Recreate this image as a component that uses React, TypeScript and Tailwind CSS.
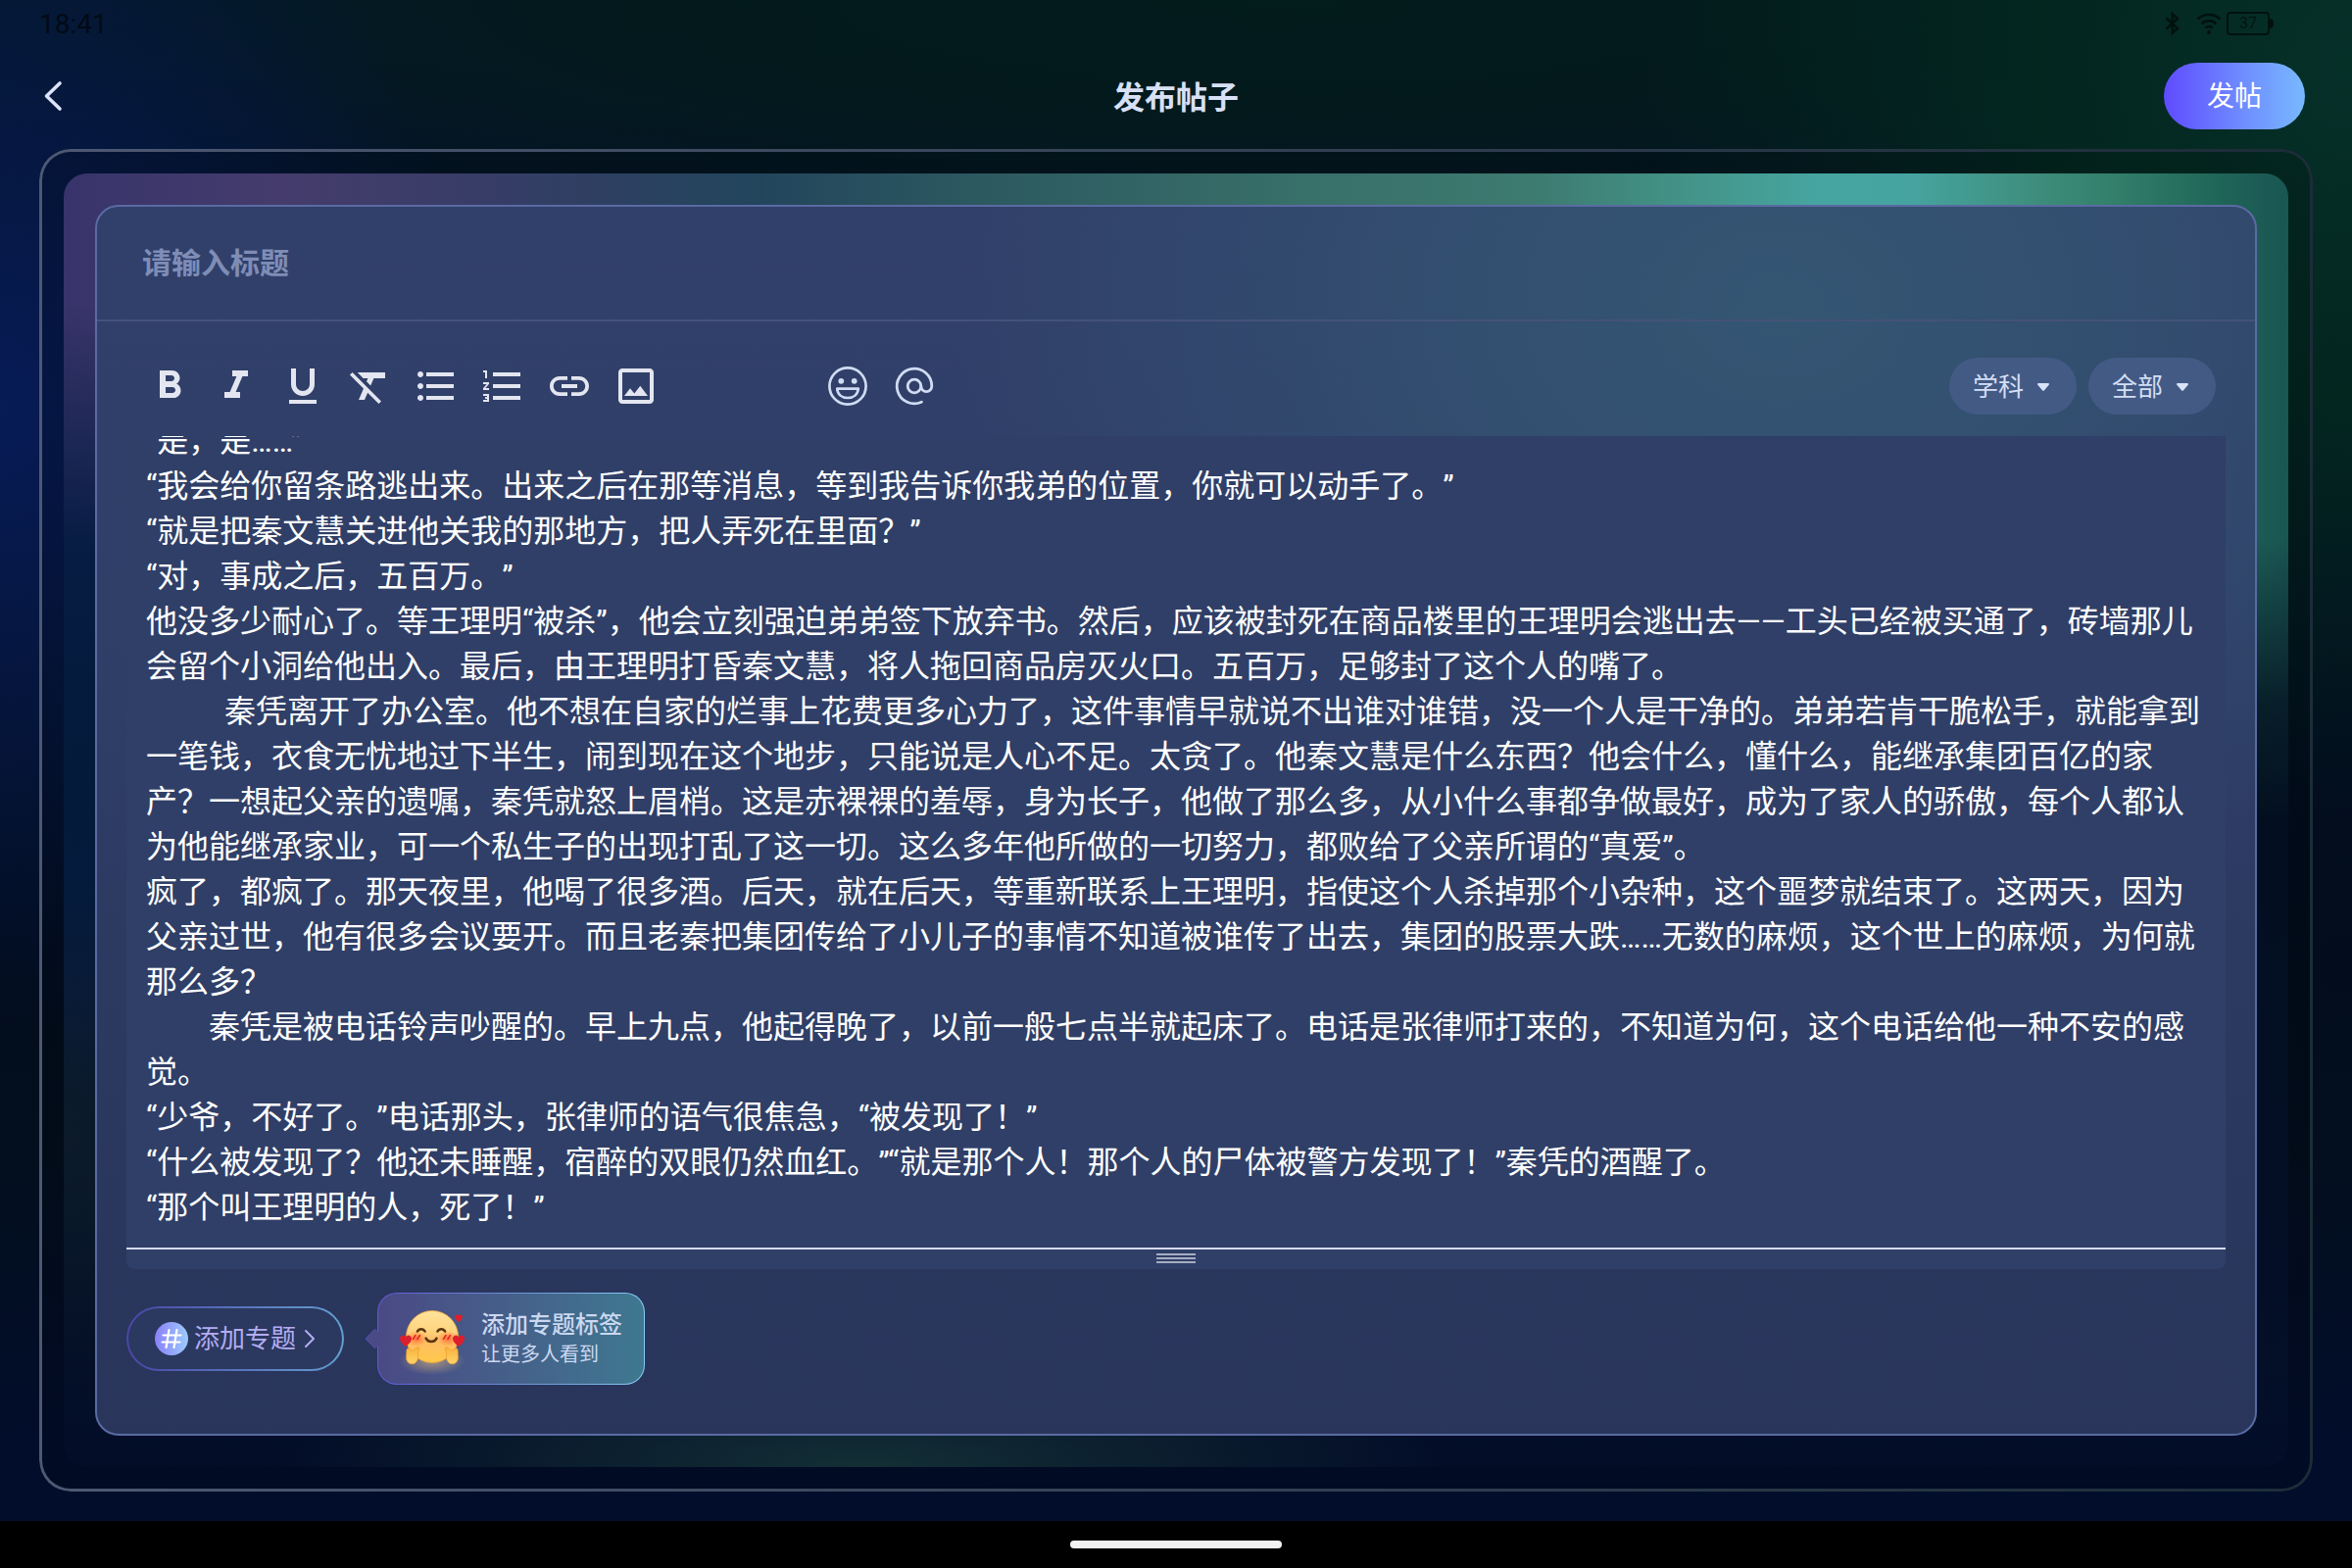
import { useLayoutEffect, useRef } from "react";
import type { ReactNode } from "react";
import {
  MdFormatBold,
  MdFormatItalic,
  MdFormatUnderlined,
  MdFormatClear,
  MdFormatListBulleted,
  MdFormatListNumbered,
  MdInsertLink,
  MdOutlineImage,
} from "react-icons/md";

const BODY = [
  "“是，是……”",
  "“我会给你留条路逃出来。出来之后在那等消息，等到我告诉你我弟的位置，你就可以动手了。”",
  "“就是把秦文慧关进他关我的那地方，把人弄死在里面？”",
  "“对，事成之后，五百万。”",
  "他没多少耐心了。等王理明“被杀”，他会立刻强迫弟弟签下放弃书。然后，应该被封死在商品楼里的王理明会逃出去——工头已经被买通了，砖墙那儿会留个小洞给他出入。最后，由王理明打昏秦文慧，将人拖回商品房灭火口。五百万，足够封了这个人的嘴了。",
  "\u3000\u3000  秦凭离开了办公室。他不想在自家的烂事上花费更多心力了，这件事情早就说不出谁对谁错，没一个人是干净的。弟弟若肯干脆松手，就能拿到一笔钱，衣食无忧地过下半生，闹到现在这个地步，只能说是人心不足。太贪了。他秦文慧是什么东西？他会什么，懂什么，能继承集团百亿的家产？一想起父亲的遗嘱，秦凭就怒上眉梢。这是赤裸裸的羞辱，身为长子，他做了那么多，从小什么事都争做最好，成为了家人的骄傲，每个人都认为他能继承家业，可一个私生子的出现打乱了这一切。这么多年他所做的一切努力，都败给了父亲所谓的“真爱”。",
  "疯了，都疯了。那天夜里，他喝了很多酒。后天，就在后天，等重新联系上王理明，指使这个人杀掉那个小杂种，这个噩梦就结束了。这两天，因为父亲过世，他有很多会议要开。而且老秦把集团传给了小儿子的事情不知道被谁传了出去，集团的股票大跌……无数的麻烦，这个世上的麻烦，为何就那么多？",
  "\u3000\u3000秦凭是被电话铃声吵醒的。早上九点，他起得晚了，以前一般七点半就起床了。电话是张律师打来的，不知道为何，这个电话给他一种不安的感觉。",
  "“少爷，不好了。”电话那头，张律师的语气很焦急，“被发现了！”",
  "“什么被发现了？他还未睡醒，宿醉的双眼仍然血红。”“就是那个人！那个人的尸体被警方发现了！”秦凭的酒醒了。",
  "“那个叫王理明的人，死了！”",
].join("\n");

function SmileIcon() {
  return (
    <svg viewBox="-24 -24 48 48" className="size-12" fill="none" stroke="currentColor" strokeWidth="2.7">
      <circle r="18.6" />
      <circle cx="-6.7" cy="-5.2" r="2.9" fill="currentColor" stroke="none" />
      <circle cx="6.7" cy="-5.2" r="2.9" fill="currentColor" stroke="none" />
      <path d="M-10.8 2.6H10.8C10.3 8.4 6 12 0 12S-10.3 8.4-10.8 2.6Z" strokeLinejoin="round" />
    </svg>
  );
}

function AtIcon() {
  return (
    <svg viewBox="-24 -24 48 48" className="size-12" fill="none" stroke="currentColor" strokeWidth="2.8" strokeLinecap="round">
      <circle r="6.8" />
      <path d="M6.8 0a5.5 5.6 0 0 0 11 0A17.8 17.8 0 1 0 7.4 16.2" />
    </svg>
  );
}

function HugEmoji() {
  const heart = "M0 6C-3.5 3.4-6 .8-6-2A3.2 3.2 0 0 1 0-3.8 3.2 3.2 0 0 1 6-2C6 .8 3.5 3.4 0 6Z";
  return (
    <svg viewBox="0 0 68 58" className="h-[58px] w-[68px] overflow-visible" aria-hidden="true">
      <defs>
        <linearGradient id="face" x1="0" y1="0" x2="0" y2="1">
          <stop offset="0" stopColor="#ffe39a" />
          <stop offset="0.35" stopColor="#ffd682" />
          <stop offset="0.6" stopColor="#ffbd63" />
          <stop offset="1" stopColor="#ffc94a" />
        </linearGradient>
        <radialGradient id="blush">
          <stop offset="0" stopColor="#ff5a36" stopOpacity="0.85" />
          <stop offset="1" stopColor="#ff7a3a" stopOpacity="0" />
        </radialGradient>
        <radialGradient id="glow">
          <stop offset="0" stopColor="#ffd27a" stopOpacity="0.5" />
          <stop offset="1" stopColor="#ffd27a" stopOpacity="0" />
        </radialGradient>
        <linearGradient id="hand" x1="0" y1="0" x2="0" y2="1">
          <stop offset="0" stopColor="#f7b23c" />
          <stop offset="1" stopColor="#ffd469" />
        </linearGradient>
      </defs>
      <ellipse cx="34" cy="52" rx="34" ry="14" fill="url(#glow)" />
      <circle cx="34" cy="27" r="26.5" fill="url(#face)" stroke="#f0a63c" strokeWidth="0.8" />
      <ellipse cx="18" cy="29" rx="11" ry="8" fill="url(#blush)" />
      <ellipse cx="50" cy="29" rx="11" ry="8" fill="url(#blush)" />
      <g fill="none" stroke="#5c3510" strokeWidth="2.6" strokeLinecap="round">
        <path d="M19 21.5c1.5-3 6-3 7.6 0" />
        <path d="M39.5 21.5c1.5-3 6-3 7.6 0" />
        <path d="M27.6 28.6c2 4.6 9 4.6 11 0" />
      </g>
      <g stroke="#e0261c" strokeWidth="1.4" strokeLinecap="round">
        <path d="M17 25.5l-2.6 4M21.5 25.5l-2.6 4M48 25.5l-2.6 4M52.5 25.5l-2.6 4" />
      </g>
      <path d={heart} transform="translate(7 31)" fill="#dc1f2c" />
      <path d={heart} transform="translate(61 31)" fill="#dc1f2c" />
      <path d={heart} transform="translate(61 8) scale(.65)" fill="#dc1f2c" />
      <g fill="url(#hand)" stroke="#eda031" strokeWidth="0.8">
        <path d="M20.5 38c1.2 1.2-1.6 4.6-1 7.4.8 4-1.6 9.400-5.800 9.400-4.400 0-6.500-3.800-6-7.600.3-2.400-.4-7 1.200-8.200 1.600-1 4 2.400 5.200 2.200 1.600-.4 4.400-4.800 6.400-3.200Z" />
        <path d="M47.500 38c-1.200 1.200 1.600 4.600 1 7.400-.8 4 1.600 9.400 5.800 9.400 4.400 0 6.500-3.800 6-7.600-.3-2.400.4-7-1.200-8.200-1.600-1-4 2.400-5.200 2.200-1.600-.4-4.400-4.800-6.400-3.200Z" />
      </g>
    </svg>
  );
}

function StatusIcons() {
  return (
    <div className="flex items-center text-black/60">
      <svg viewBox="0 0 18 26" className="h-[26px] w-[18px]" fill="none" stroke="currentColor" strokeWidth="2.4">
        <path d="M2.500 7.500 14 18 8.800 22.600V3.200L14 8 2.500 18.500" />
      </svg>
      <svg viewBox="0 0 28 24" className="ml-[14px] h-6 w-7" fill="none" stroke="currentColor" strokeWidth="2.600">
        <path d="M2.500 7.500a17 17 0 0 1 23 0M6.500 12.200a11 11 0 0 1 15 0M10.300 16.600a5.400 5.400 0 0 1 7.400 0" />
        <circle cx="14" cy="21" r="1.900" fill="currentColor" stroke="none" />
      </svg>
      <span className="ml-1 flex h-6 w-11 items-center justify-center rounded border-2 border-black/60 text-base">37</span>
      <span className="h-2.5 w-1 rounded-r-sm bg-black/60" />
    </div>
  );
}

function ToolButton({ label, children }: { label: string; children: ReactNode }) {
  return (
    <button type="button" aria-label={label} className="flex h-12 w-[68px] items-center justify-center">
      {children}
    </button>
  );
}

function PillSelect({ label, value }: { label: string; value: string }) {
  return (
    <div className="relative">
      <select
        aria-label={label}
        defaultValue={value}
        className="h-[58px] w-[130px] appearance-none rounded-full bg-[#435a85] pt-0.5 pl-6 text-[26px] text-[#d3dff5] outline-none"
      >
        <option>{value}</option>
      </select>
      <svg viewBox="0 0 12 8" className="pointer-events-none absolute top-[26px] right-7 h-2 w-3" aria-hidden="true">
        <path d="M1 0h10a1 1 0 0 1 .7 1.700L7 7.200a1.400 1.400 0 0 1-2 0L.3 1.700A1 1 0 0 1 1 0Z" fill="#d9e3f8" />
      </svg>
    </div>
  );
}

const TOOLS = [
  { label: "加粗", Icon: MdFormatBold },
  { label: "斜体", Icon: MdFormatItalic },
  { label: "下划线", Icon: MdFormatUnderlined },
  { label: "清除格式", Icon: MdFormatClear },
  { label: "无序列表", Icon: MdFormatListBulleted },
  { label: "有序列表", Icon: MdFormatListNumbered },
  { label: "链接", Icon: MdInsertLink },
  { label: "图片", Icon: MdOutlineImage },
];

function Editor() {
  const area = useRef<HTMLTextAreaElement>(null);

  useLayoutEffect(() => {
    const el = area.current;
    if (el) el.scrollTop = el.scrollHeight;
  }, []);

  return (
    <div className="flex flex-1 flex-col overflow-hidden rounded-b-lg bg-[#303f67]">
      <textarea
        ref={area}
        aria-label="正文"
        defaultValue={BODY}
        spellCheck={false}
        className="w-full flex-1 resize-none border-b-2 border-[#d5daf0] px-5 pb-[18px] text-[32px] leading-[46px] text-white outline-none [scrollbar-width:none] [text-spacing-trim:space-all]"
      />
      <div className="flex h-5 flex-col items-center gap-[2px] pt-1">
        <span className="h-[2px] w-10 bg-[#a5adc2]" />
        <span className="h-[2px] w-10 bg-[#a5adc2]" />
        <span className="h-[2px] w-10 bg-[#a5adc2]" />
      </div>
    </div>
  );
}

export default function App() {
  return (
    <div
      lang="zh-CN"
      className="flex min-h-screen flex-col bg-[#020c24] bg-[radial-gradient(ellipse_30%_48%_at_100%_4%,#053028_0%,#03261f_45%,transparent_100%),radial-gradient(ellipse_20%_40%_at_0%_26%,#071b56_0%,#06194ab3_45%,transparent_100%),radial-gradient(ellipse_60%_16%_at_55%_0%,#031c1c_0%,#03191d_50%,transparent_100%),linear-gradient(180deg,#04182a_0%,#030f22_20%,#020c1c_62%,#030f1e_74%,#020d2b_92%)] font-[Roboto,'Noto_Sans_CJK_SC',sans-serif]"
    >
      <div className="flex h-12 items-center justify-between pr-20 pl-10">
        <span className="pt-0.5 text-[28px] text-black/60">18:41</span>
        <StatusIcons />
      </div>

      <header className="grid h-[104px] grid-cols-3 items-center px-10 pb-1">
        <button type="button" aria-label="返回" className="w-8">
          <svg viewBox="0 0 32 36" className="h-9 w-8" fill="none" stroke="#dbe3fa" strokeWidth="3.600" strokeLinecap="round" strokeLinejoin="round">
            <path d="M21 5 7.500 18 21 31" />
          </svg>
        </button>
        <h1 className="pt-1 text-center text-[32px] font-bold text-[#d8e0f6]">发布帖子</h1>
        <button
          type="button"
          className="mr-2 h-[68px] w-36 justify-self-end rounded-full bg-[linear-gradient(90deg,#5f4bff,#6e8cff_55%,#78b9ff)] pt-0.5 text-[28px] text-white"
        >
          发帖
        </button>
      </header>

      <main className="relative mx-10 mb-[30px] flex flex-1 flex-col rounded-[32px] bg-black/15 p-[25px] before:pointer-events-none before:absolute before:inset-0 before:rounded-[32px] before:bg-[linear-gradient(90deg,#4d5873,#1c2c38)] before:p-[3px] before:content-[''] before:[mask:linear-gradient(#000_0_0)_content-box_exclude,linear-gradient(#000_0_0)]">
        <div className="flex flex-1 flex-col rounded-3xl bg-[radial-gradient(ellipse_26%_10%_at_36%_100%,#132f35_0%,transparent_100%),radial-gradient(ellipse_8%_20%_at_0%_74%,#0c1a28_0%,transparent_100%),radial-gradient(ellipse_20%_38%_at_0%_48%,#031a3a_0%,#061c42_50%,transparent_100%),linear-gradient(180deg,transparent_0%,transparent_28%,#03101fcc_41%,#030f20_50%,#040f28_92%,#030d28_100%),linear-gradient(90deg,#38346b_0%,#453c6c_10%,#353d66_20%,#22455c_31%,#2d5a60_42%,#38706a_56%,#3d7a70_66%,#44978c_74%,#46a5a1_79%,#46a4a0_83%,#3f9080_88%,#33806b_92%,#1f6458_97%,#1a5653_100%)] p-8">
          <div className="flex flex-1 flex-col rounded-3xl border-2 border-[#5a6ba3] bg-[#2c385f] bg-[radial-gradient(ellipse_38%_50%_at_78%_8%,#345673_0%,#345673b3_35%,transparent_100%),linear-gradient(180deg,#31406a_0%,#2f3f68_35%,#2b385f_70%,#29355b_100%)]">
            <div className="flex h-[117px] items-center border-b-2 border-[#445279] px-[46px]">
              <input
                aria-label="标题"
                placeholder="请输入标题"
                className="w-full text-[30px] font-bold text-white outline-none placeholder:text-[#7f8db6]"
              />
            </div>

            <div className="flex flex-1 flex-col px-[30px]">
              <div className="flex items-center px-[10px] pt-[37px] pb-[22px]">
                <div className="flex text-[#e3e6f0]">
                  {TOOLS.map(({ label, Icon }) => (
                    <ToolButton key={label} label={label}>
                      <Icon className="size-12" />
                    </ToolButton>
                  ))}
                </div>
                <div className="ml-[148px] flex text-[#d0dcf3]">
                  <ToolButton label="表情">
                    <SmileIcon />
                  </ToolButton>
                  <ToolButton label="提及">
                    <AtIcon />
                  </ToolButton>
                </div>
                <div className="ml-auto flex gap-3">
                  <PillSelect label="学科" value="学科" />
                  <PillSelect label="范围" value="全部" />
                </div>
              </div>

              <Editor />

              <div className="flex items-center gap-[34px] pt-6 pb-[50px]">
                <button
                  type="button"
                  className="flex h-[66px] w-[222px] items-center rounded-full border-2 border-transparent pl-[27px] text-[26px] text-[#b3acf2] [background:linear-gradient(#2b385f,#2b385f)_padding-box,linear-gradient(90deg,#4b46a6,#639fd0)_border-box]"
                >
                  <svg viewBox="0 0 34 34" className="size-[34px]" aria-hidden="true">
                    <defs>
                      <linearGradient id="hash">
                        <stop offset="0" stopColor="#8a80f8" />
                        <stop offset="1" stopColor="#9ccbff" />
                      </linearGradient>
                    </defs>
                    <circle cx="17" cy="17" r="17" fill="url(#hash)" />
                    <path d="M14.500 8 11.500 26M22.500 8l-3 18M8.500 13.500h18M7.500 20.500h18" stroke="#fff" strokeWidth="2.200" strokeLinecap="round" />
                  </svg>
                  <span className="ml-[6px]">添加专题</span>
                  <svg viewBox="0 0 12 20" className="ml-2 h-5 w-3" fill="none" stroke="currentColor" strokeWidth="2" strokeLinecap="round" strokeLinejoin="round" aria-hidden="true">
                    <path d="M2 2l8 8-8 8" />
                  </svg>
                </button>

                <div className="relative flex h-[94px] w-[273px] items-center rounded-[20px] border border-transparent pl-[21px] [background:linear-gradient(90deg,#4a4a85,#45608a_50%,#3f7890)_padding-box,linear-gradient(90deg,#6059d0,#6f9ad8_60%,#86cdf5)_border-box]">
                  <span className="absolute top-1/2 -left-[11px] size-[15px] -translate-y-1/2 rotate-45 rounded-bl-[3px] border-b border-l border-[#5650bf] bg-[#4a4a85]" />
                  <HugEmoji />
                  <div className="ml-4 flex flex-col text-[#cbd8f0]">
                    <strong className="text-[24px] leading-8 font-medium">添加专题标签</strong>
                    <span className="text-[20px] leading-7">让更多人看到</span>
                  </div>
                </div>
              </div>
            </div>
          </div>
        </div>
      </main>

      <footer className="flex h-12 items-center justify-center bg-black">
        <span className="h-2 w-[216px] rounded-full bg-[#f2f2f2]" />
      </footer>
    </div>
  );
}
